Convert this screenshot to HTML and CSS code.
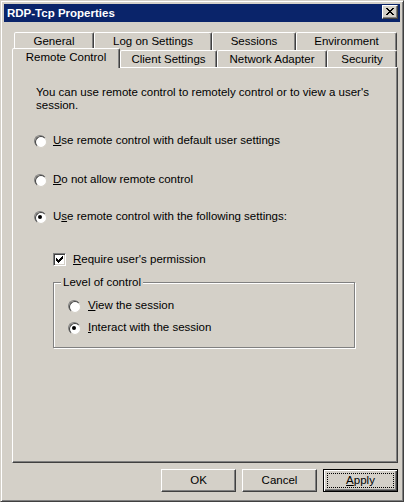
FILE: index.html
```html
<!DOCTYPE html>
<html>
<head>
<meta charset="utf-8">
<title>RDP-Tcp Properties</title>
<link rel="stylesheet" href="styles.css">
</head>
<body>
<div class="window">
  <div class="titlebar">
    <span class="title">RDP-Tcp Properties</span>
    <span class="close-btn">
      <svg width="14" height="12" viewBox="0 0 14 12" shape-rendering="crispEdges">
        <g fill="#000">
          <rect x="3" y="2" width="2" height="1"/><rect x="9" y="2" width="2" height="1"/>
          <rect x="4" y="3" width="2" height="1"/><rect x="8" y="3" width="2" height="1"/>
          <rect x="5" y="4" width="4" height="1"/>
          <rect x="6" y="5" width="2" height="1"/>
          <rect x="5" y="6" width="4" height="1"/>
          <rect x="4" y="7" width="2" height="1"/><rect x="8" y="7" width="2" height="1"/>
          <rect x="3" y="8" width="2" height="1"/><rect x="9" y="8" width="2" height="1"/>
        </g>
      </svg>
    </span>
  </div>

  <div class="tabs">
    <div class="tab-row back">
      <div class="tab w-general">General</div>
      <div class="tab w-logon">Log on Settings</div>
      <div class="tab w-sessions">Sessions</div>
      <div class="tab w-env">Environment</div>
    </div>
    <div class="tab-row front">
      <div class="tab selected w-remote">Remote Control</div>
      <div class="tab w-client">Client Settings</div>
      <div class="tab w-network">Network Adapter</div>
      <div class="tab w-security">Security</div>
    </div>
  </div>

  <div class="panel">
    <p class="intro">You can use remote control to remotely control or to view a user's<br>session.</p>

    <div class="option opt-1"><span class="radio"></span><span class="label"><u>U</u>se remote control with default user settings</span></div>
    <div class="option opt-2"><span class="radio"></span><span class="label"><u>D</u>o not allow remote control</span></div>
    <div class="option opt-3"><span class="radio checked"></span><span class="label">U<u>s</u>e remote control with the following settings:</span></div>

    <div class="option check-row">
      <span class="checkbox">
        <svg width="7" height="7" viewBox="0 0 7 7" shape-rendering="crispEdges">
          <g fill="#000">
            <rect x="0" y="2" width="1" height="3"/>
            <rect x="1" y="3" width="1" height="3"/>
            <rect x="2" y="4" width="1" height="3"/>
            <rect x="3" y="3" width="1" height="3"/>
            <rect x="4" y="2" width="1" height="3"/>
            <rect x="5" y="1" width="1" height="3"/>
            <rect x="6" y="0" width="1" height="3"/>
          </g>
        </svg>
      </span>
      <span class="label"><u>R</u>equire user's permission</span>
    </div>

    <div class="group">
      <div class="legend">Level of control</div>
      <div class="option group-opt view"><span class="radio"></span><span class="label"><u>V</u>iew the session</span></div>
      <div class="option group-opt interact"><span class="radio checked"></span><span class="label"><u>I</u>nteract with the session</span></div>
    </div>
  </div>

  <div class="buttons">
    <div class="btn">OK</div>
    <div class="btn">Cancel</div>
    <div class="btn default"><span><u>A</u>pply</span></div>
  </div>
</div>
</body>
</html>
```

FILE: styles.css
```css
* { box-sizing: border-box; }

html, body {
  margin: 0;
  padding: 0;
}

body {
  width: 404px;
  height: 502px;
  background: #d4d0c8;
  font-family: "Liberation Sans", Arial, sans-serif;
  font-size: 11.5px;
  line-height: 13px;
  color: #000;
}

u {
  text-decoration-thickness: 1px;
  text-underline-offset: 1px;
}

.window {
  width: 404px;
  height: 502px;
  background: #d4d0c8;
  border: 1px solid;
  border-color: #d4d0c8 #404040 #404040 #d4d0c8;
  box-shadow: inset 1px 1px 0 #fff, inset -1px -1px 0 #808080;
  padding: 3px;
}

/* ---------- title bar ---------- */
.titlebar {
  height: 18px;
  background: #0a246a;
  display: flex;
  align-items: flex-start;
  justify-content: space-between;
  padding: 0 2px 0 3px;
}

.title {
  color: #fff;
  font-weight: bold;
  line-height: 18px;
}

.close-btn {
  margin-top: 1px;
  width: 16px;
  height: 14px;
  background: #d4d0c8;
  border: 1px solid;
  border-color: #fff #404040 #404040 #fff;
  box-shadow: inset -1px -1px 0 #808080;
  display: block;
}

.close-btn svg { display: block; }

/* ---------- tabs ---------- */
.tabs {
  margin: 10px 0 0 8px;
}

.tab-row {
  display: flex;
}

.tab-row.back {
  height: 18px;
  padding-left: 2px;
}

.tab-row.front {
  height: 17px;
  position: relative;
  z-index: 1;
}

.tab {
  height: 100%;
  border: 1px solid;
  border-bottom: none;
  border-color: #fff #404040 transparent #fff;
  border-radius: 2px 2px 0 0;
  box-shadow: inset -1px 0 0 #808080;
  background: #d4d0c8;
  text-align: center;
  padding-top: 2px;
  white-space: nowrap;
}

.tab.selected {
  height: 20px;
  margin-top: -2px;
  padding-top: 2px;
}

.w-general  { width: 80px; }
.w-logon    { width: 118px; }
.w-sessions { width: 84px; }
.w-env      { width: 101px; }

.w-remote   { width: 108px; }
.w-client   { width: 97px; }
.w-network  { width: 110px; }
.w-security { width: 70px; }

/* ---------- panel ---------- */
.panel {
  width: 386px;
  height: 396px;
  margin-left: 8px;
  border: 1px solid;
  border-color: #fff #404040 #404040 #fff;
  box-shadow: inset -1px -1px 0 #808080;
  padding: 18px 0 0 21px;
}

.intro {
  margin: 0;
  padding-left: 2px;
}

.option {
  display: flex;
  align-items: center;
  height: 13px;
  gap: 7px;
  white-space: nowrap;
}

.opt-1 { margin-top: 22px; }
.opt-2 { margin-top: 26px; }
.opt-3 { margin-top: 24px; }

.check-row {
  margin-top: 30px;
  margin-left: 19px;
}

/* radio button */
.radio {
  position: relative;
  flex: none;
  width: 12px;
  height: 12px;
  border-radius: 50%;
  border: 1px solid;
  border-color: #808080 #fff #fff #808080;
}

.radio::before {
  content: "";
  display: block;
  width: 10px;
  height: 10px;
  border-radius: 50%;
  border: 1px solid;
  border-color: #404040 #d4d0c8 #d4d0c8 #404040;
  background: #fff;
}

.radio.checked::after {
  content: "";
  position: absolute;
  left: 3px;
  top: 3px;
  width: 4px;
  height: 4px;
  border-radius: 50%;
  background: #000;
}

/* checkbox */
.checkbox {
  flex: none;
  width: 13px;
  height: 13px;
  border: 1px solid;
  border-color: #808080 #fff #fff #808080;
  box-shadow: inset 1px 1px 0 #404040, inset -1px -1px 0 #d4d0c8;
  background: #fff;
  padding: 2px 0 0 2px;
}

.checkbox svg { display: block; }

/* group box */
.group {
  margin: 16px 0 0 19px;
  width: 302px;
  height: 66px;
  border: 1px solid #808080;
  box-shadow: inset 1px 1px 0 #fff, 1px 1px 0 #fff;
}

.legend {
  display: table;
  margin: -7px 0 0 7px;
  padding: 0 2px;
  background: #d4d0c8;
}

.group-opt {
  margin-left: 14px;
  gap: 8px;
}

.group-opt.view { margin-top: 10px; }
.group-opt.interact { margin-top: 9px; }

/* ---------- buttons ---------- */
.buttons {
  display: flex;
  justify-content: flex-end;
  gap: 6px;
  margin-top: 6px;
  padding-right: 2px;
}

.btn {
  position: relative;
  width: 75px;
  height: 23px;
  border: 1px solid;
  border-color: #fff #404040 #404040 #fff;
  box-shadow: inset -1px -1px 0 #808080;
  display: flex;
  align-items: center;
  justify-content: center;
}

.btn.default {
  border-color: #000;
  box-shadow: inset 1px 1px 0 #fff, inset -1px -1px 0 #404040, inset -2px -2px 0 #808080;
}

.btn.default::after {
  content: "";
  position: absolute;
  left: 3px;
  top: 3px;
  right: 3px;
  bottom: 3px;
  border: 1px dotted #000;
}
```
